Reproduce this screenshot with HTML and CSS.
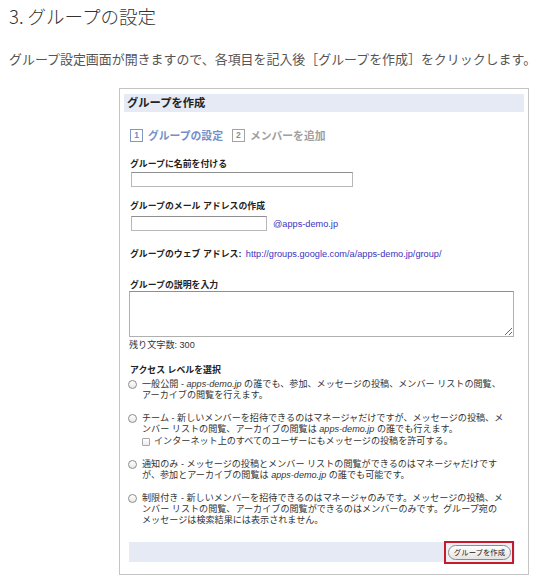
FILE: index.html
```html
<!DOCTYPE html>
<html lang="ja">
<head>
<meta charset="utf-8">
<title>グループの設定</title>
<link rel="stylesheet" href="styles.css">
</head>
<body>
<h2 class="title">3. グループの設定</h2>
<p class="lead">グループ設定画面が開きますので、各項目を記入後［グループを作成］をクリックします。</p>

<div class="dialog">
  <div class="dlg-head">グループを作成</div>
  <div class="dlg-body">
    <div class="steps">
      <span class="step-num active">1</span><span class="step-label active">グループの設定</span>
      <span class="step-num">2</span><span class="step-label">メンバーを追加</span>
    </div>

    <div class="label l-name">グループに名前を付ける</div>
    <div class="input i-name"></div>

    <div class="label l-mail">グループのメール アドレスの作成</div>
    <div class="mail-row"><div class="input i-mail"></div><span class="link domain">@apps-demo.jp</span></div>

    <div class="web-row"><span class="label-inline">グループのウェブ アドレス:</span> <span class="link">http://groups.google.com/a/apps-demo.jp/group/</span></div>

    <div class="label l-desc">グループの説明を入力</div>
    <textarea class="desc"></textarea>
    <div class="remain">残り文字数: 300</div>

    <div class="label l-access">アクセス レベルを選択</div>

    <div class="opt first">
      <span class="radio"></span>
      <div class="opt-text">一般公開 - <i>apps-demo.jp</i> の誰でも、参加、メッセージの投稿、メンバー リストの閲覧、<br>アーカイブの閲覧を行えます。</div>
    </div>
    <div class="opt">
      <span class="radio"></span>
      <div class="opt-text">チーム - 新しいメンバーを招待できるのはマネージャだけですが、メッセージの投稿、メ<br>ンバー リストの閲覧、アーカイブの閲覧は <i>apps-demo.jp</i> の誰でも行えます。
        <div class="check-line"><span class="check"></span>インターネット上のすべてのユーザーにもメッセージの投稿を許可する。</div>
      </div>
    </div>
    <div class="opt">
      <span class="radio"></span>
      <div class="opt-text">通知のみ - メッセージの投稿とメンバー リストの閲覧ができるのはマネージャだけです<br>が、参加とアーカイブの閲覧は <i>apps-demo.jp</i> の誰でも可能です。</div>
    </div>
    <div class="opt">
      <span class="radio"></span>
      <div class="opt-text">制限付き - 新しいメンバーを招待できるのはマネージャのみです。メッセージの投稿、メ<br>ンバー リストの閲覧、アーカイブの閲覧ができるのはメンバーのみです。グループ宛の<br>メッセージは検索結果には表示されません。</div>
    </div>

    <div class="dlg-foot">
      <span class="mark"><span class="btn">グループを作成</span></span>
    </div>
  </div>
</div>
</body>
</html>
```

FILE: styles.css
```css
html, body {
  margin: 0;
  padding: 0;
  background: #ffffff;
}
body {
  padding-left: 9px;
  font-family: "Noto Sans CJK JP", sans-serif;
  color: #333;
}
.title {
  margin: 0;
  font-size: 18.5px;
  line-height: 32px;
  font-weight: 300;
  color: #333;
}
.lead {
  margin: 17px 0 0 0;
  font-size: 12.95px;
  line-height: 20px;
  color: #555;
  white-space: nowrap;
}
.dialog {
  box-sizing: border-box;
  margin: 19px 0 0 110px;
  width: 410px;
  height: 487px;
  border: 1px solid #c4c4c4;
  padding-top: 5px;
  font-family: "Liberation Sans", "Noto Sans CJK JP", sans-serif;
  color: #222;
}
.dlg-head {
  margin: 0 4px;
  height: 18px;
  line-height: 18px;
  background: #e5eaf5;
  padding-left: 3px;
  font-size: 11.3px;
  font-weight: bold;
  color: #222;
}
.dlg-body {
  padding: 0 13px 0 9px;
}
.steps {
  margin-top: 15px;
  height: 16px;
  display: flex;
  align-items: center;
  padding-left: 1px;
}
.step-num {
  box-sizing: border-box;
  width: 13px;
  height: 13px;
  border: 1.5px solid #a3a3a3;
  font-size: 8.5px;
  font-weight: bold;
  line-height: 10px;
  text-align: center;
  color: #8d8d8d;
}
.step-num.active {
  border-color: #7f98c9;
  color: #6f8cc6;
}
.step-label {
  margin-left: 5px;
  margin-right: 9px;
  font-size: 10.8px;
  font-weight: bold;
  color: #a0a0a0;
}
.step-label.active {
  color: #7590c8;
}
.label {
  font-size: 8.9px;
  font-weight: bold;
  line-height: 12px;
  padding-left: 1px;
  white-space: nowrap;
}
.l-name { margin-top: 15px; }
.l-mail { margin-top: 13px; }
.l-desc { margin-top: 19px; }
.l-access { margin-top: 13px; }
.input {
  box-sizing: border-box;
  height: 15px;
  border: 1px solid #b8b8b8;
  border-top-color: #8f8f8f;
  background: #fff;
  margin-left: 2px;
}
.i-name {
  margin-top: 2px;
  width: 222px;
}
.mail-row {
  margin-top: 4px;
  display: flex;
  align-items: center;
}
.i-mail {
  width: 136px;
}
.link {
  color: #3b33c0;
  font-size: 9.2px;
}
.domain {
  margin-left: 6px;
}
.web-row {
  margin-top: 15px;
  line-height: 12px;
  white-space: nowrap;
  padding-left: 1px;
}
.label-inline {
  font-size: 8.9px;
  font-weight: bold;
}
.desc {
  display: block;
  box-sizing: border-box;
  margin: 0;
  width: 385px;
  height: 46px;
  border: 1px solid #b0b0b0;
  border-top-color: #8f8f8f;
  padding: 2px;
  background: #fff;
}
.remain {
  margin-top: 2px;
  font-size: 9.1px;
  line-height: 12px;
  color: #333;
}
.opt {
  display: flex;
  align-items: flex-start;
  margin-top: 12px;
}
.opt.first {
  margin-top: 3px;
}
.radio {
  flex: none;
  box-sizing: border-box;
  width: 9px;
  height: 9px;
  margin: 1px 5px 0 -1px;
  border: 1px solid #8c8c8c;
  border-radius: 50%;
  background: linear-gradient(#ffffff, #e8e8e8);
}
.opt-text {
  font-size: 9.1px;
  line-height: 11px;
  white-space: nowrap;
  color: #333;
}
.opt-text i {
  font-style: italic;
}
.check-line {
  display: flex;
  align-items: center;
  margin-top: 1px;
}
.check {
  box-sizing: border-box;
  width: 8px;
  height: 8px;
  margin-right: 4px;
  border: 1px solid #a8a8a8;
  border-radius: 1px;
  background: linear-gradient(#ffffff, #ececec);
}
.dlg-foot {
  margin-top: 16px;
  height: 20px;
  background: #e5eaf5;
  display: flex;
  justify-content: flex-end;
  align-items: center;
}
.mark {
  box-sizing: border-box;
  height: 23px;
  width: 70px;
  margin-right: 1px;
  border: 2px solid #c41a2e;
  padding: 2px 1px 2px 2px;
  display: flex;
  align-items: center;
  justify-content: flex-end;
  background: #eef0f5;
}
.btn {
  box-sizing: border-box;
  width: 64px;
  height: 15px;
  border: 1px solid #8a8a8a;
  border-radius: 8px;
  background: linear-gradient(#ffffff, #e4e4e4);
  font-size: 7.4px;
  line-height: 13px;
  text-align: center;
  color: #222;
  white-space: nowrap;
}
```
